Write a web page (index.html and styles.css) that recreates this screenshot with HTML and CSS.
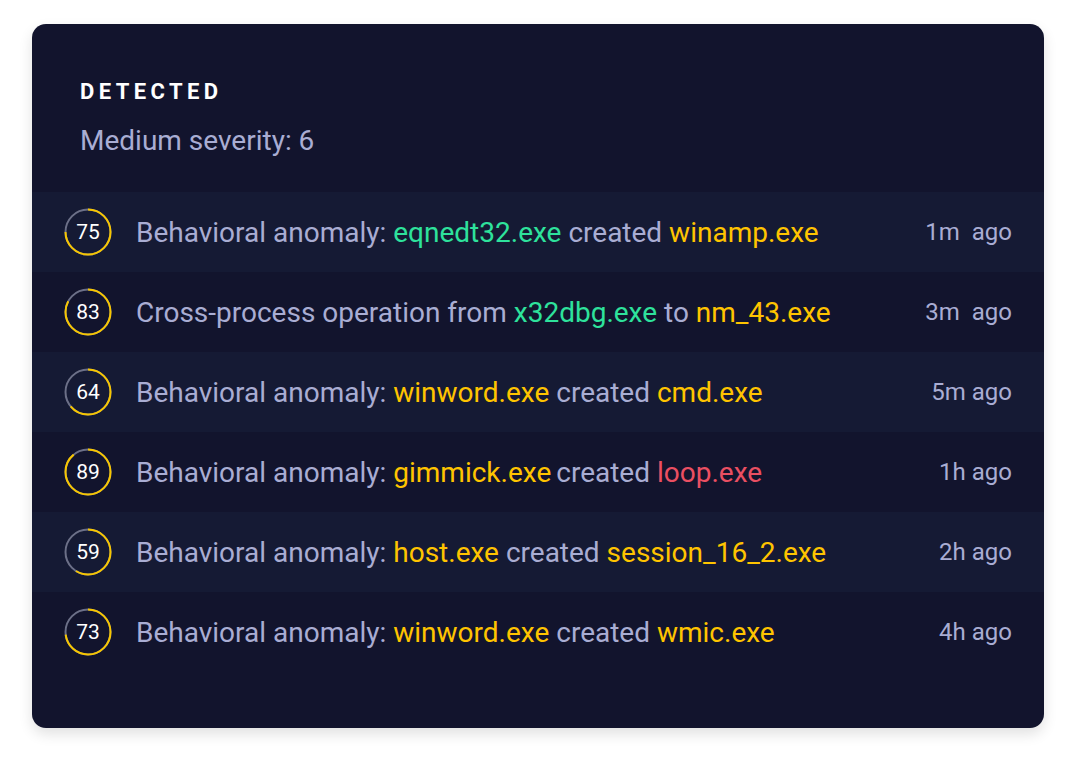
FILE: index.html
```html
<!DOCTYPE html>
<html lang="en">
<head>
    <meta charset="UTF-8">
    <title>Detected</title>
    <link rel="stylesheet" href="styles.css">
</head>
<body>
    <div class="card">
        <div class="card-header">
            <h2 class="title">DETECTED</h2>
            <p class="subtitle">Medium severity: 6</p>
        </div>

        <ul class="events">
            <li class="event">
                <svg class="score" viewBox="0 0 48 48"><circle class="track" cx="24" cy="24" r="22.5"/><circle class="arc" cx="24" cy="24" r="22.5" pathLength="100" stroke-dasharray="75 100"/><text x="24" y="24">75</text></svg>
                <span class="desc">Behavioral anomaly: <span class="green">eqnedt32.exe</span> created <span class="yellow">winamp.exe</span></span>
                <span class="time">1m&nbsp; ago</span>
            </li>
            <li class="event">
                <svg class="score" viewBox="0 0 48 48"><circle class="track" cx="24" cy="24" r="22.5"/><circle class="arc" cx="24" cy="24" r="22.5" pathLength="100" stroke-dasharray="83 100"/><text x="24" y="24">83</text></svg>
                <span class="desc">Cross-process operation from <span class="green">x32dbg.exe</span> to <span class="yellow">nm_43.exe</span></span>
                <span class="time">3m&nbsp; ago</span>
            </li>
            <li class="event">
                <svg class="score" viewBox="0 0 48 48"><circle class="track" cx="24" cy="24" r="22.5"/><circle class="arc" cx="24" cy="24" r="22.5" pathLength="100" stroke-dasharray="64 100"/><text x="24" y="24">64</text></svg>
                <span class="desc">Behavioral anomaly: <span class="yellow">winword.exe</span> created <span class="yellow">cmd.exe</span></span>
                <span class="time">5m ago</span>
            </li>
            <li class="event">
                <svg class="score" viewBox="0 0 48 48"><circle class="track" cx="24" cy="24" r="22.5"/><circle class="arc" cx="24" cy="24" r="22.5" pathLength="100" stroke-dasharray="89 100"/><text x="24" y="24">89</text></svg>
                <span class="desc">Behavioral anomaly: <span class="yellow tight">gimmick.exe</span>created <span class="red">loop.exe</span></span>
                <span class="time">1h ago</span>
            </li>
            <li class="event">
                <svg class="score" viewBox="0 0 48 48"><circle class="track" cx="24" cy="24" r="22.5"/><circle class="arc" cx="24" cy="24" r="22.5" pathLength="100" stroke-dasharray="59 100"/><text x="24" y="24">59</text></svg>
                <span class="desc">Behavioral anomaly: <span class="yellow">host.exe</span> created <span class="yellow">session_16_2.exe</span></span>
                <span class="time">2h ago</span>
            </li>
            <li class="event">
                <svg class="score" viewBox="0 0 48 48"><circle class="track" cx="24" cy="24" r="22.5"/><circle class="arc" cx="24" cy="24" r="22.5" pathLength="100" stroke-dasharray="73 100"/><text x="24" y="24">73</text></svg>
                <span class="desc">Behavioral anomaly: <span class="yellow">winword.exe</span> created <span class="yellow">wmic.exe</span></span>
                <span class="time">4h ago</span>
            </li>
        </ul>
    </div>
</body>
</html>
```

FILE: styles.css
```css
body {
    margin: 0;
    padding: 24px 32px 40px;
    background: #ffffff;
    font-family: 'Roboto', 'Liberation Sans', sans-serif;
}

.card {
    background: #12142d;
    border-radius: 14px;
    padding-bottom: 56px;
    box-shadow: 0 6px 14px rgba(0, 0, 0, 0.12);
    overflow: hidden;
}

.card-header {
    padding: 56px 48px 36px;
}

.title {
    margin: 0;
    color: #ffffff;
    font-size: 22px;
    font-weight: 700;
    letter-spacing: 0.2em;
    line-height: 24px;
}

.subtitle {
    margin: 22px 0 0;
    color: #a9add3;
    font-size: 28px;
    line-height: 30px;
}

.events {
    list-style: none;
    margin: 0;
    padding: 0;
}

.event {
    display: flex;
    align-items: center;
    height: 80px;
    padding: 0 32px;
}

.event:nth-child(odd) {
    background: #151a34;
}

.score {
    width: 48px;
    height: 48px;
    flex-shrink: 0;
    transform: rotate(-90deg);
}

.score circle {
    fill: none;
    stroke-width: 2;
}

.score .track {
    stroke: #6c7088;
}

.score .arc {
    stroke: #f7c600;
}

.score text {
    fill: #ffffff;
    font-size: 21px;
    text-anchor: middle;
    dominant-baseline: central;
    transform: rotate(90deg);
    transform-origin: 24px 24px;
}

.desc {
    flex: 1;
    margin-left: 24px;
    color: #a9add3;
    font-size: 28px;
    white-space: nowrap;
}

.green {
    color: #2ee29c;
}

.yellow {
    color: #ffc400;
}

.red {
    color: #ea4f62;
}

.tight {
    margin-right: 5px;
}

.time {
    color: #a9add3;
    font-size: 24px;
}
```
